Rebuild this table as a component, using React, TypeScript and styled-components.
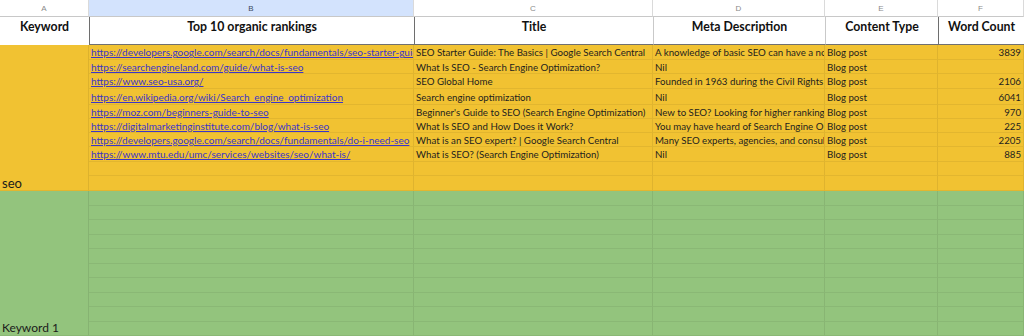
import React from "react";
import styled, { createGlobalStyle } from "styled-components";

const YELLOW = "#f1c232";
const GREEN = "#93c47d";

const GlobalStyle = createGlobalStyle`
  html, body { margin: 0; padding: 0; background: #ffffff; }
  body { font-family: Lato, "Open Sans", sans-serif; overflow: hidden; }
`;

const COLS = [89, 325, 239, 172, 113, 86];
const YELLOW_ROWS = [15, 14, 15, 16, 14, 14, 14, 15, 14, 15];
const GREEN_ROWS = [15, 14, 15, 14, 15, 14, 15, 14, 15, 14];

const Sheet = styled.div`
  display: grid;
  width: 1024px;
  height: 336px;
  overflow: hidden;
  grid-template-columns: ${COLS.map((c) => c + "px").join(" ")};
  grid-template-rows: 17px 28px ${[...YELLOW_ROWS, ...GREEN_ROWS].map((r) => r + "px").join(" ")};
`;

const ColLetter = styled.div<{ $active?: boolean }>`
  display: flex;
  align-items: center;
  justify-content: center;
  background: ${(p) => (p.$active ? "#d3e3fd" : "#ffffff")};
  color: ${(p) => (p.$active ? "#3c4a60" : "#8a8a8a")};
  font-family: "Liberation Sans", Arial, sans-serif;
  font-size: 8px;
  border-right: 1px solid #dadada;
  border-bottom: 1px solid #c8c8c8;
  box-sizing: border-box;
`;

const HeadCell = styled.div<{ $dark?: boolean; $first?: boolean }>`
  display: flex;
  justify-content: center;
  align-items: flex-start;
  padding-top: 2px;
  box-sizing: border-box;
  background: #ffffff;
  font-family: Lato, sans-serif;
  font-weight: 700;
  font-size: 12.3px;
  line-height: 16px;
  color: #111;
  border-left: ${(p) => (p.$first ? "none" : `1px solid ${p.$dark ? "#6e6e6e" : "#c9c9c9"}`)};
  border-bottom: ${(p) => (p.$first ? "none" : "1.5px solid #707070")};
  white-space: nowrap;
  overflow: hidden;
`;

const KeywordCell = styled.div<{ $bg: string; $span: number; $size: number }>`
  grid-row: span ${(p) => p.$span};
  background: ${(p) => p.$bg};
  display: flex;
  align-items: flex-end;
  padding: 0 2px 0 2px;
  box-sizing: border-box;
  font-family: Lato, sans-serif;
  font-size: ${(p) => p.$size}px;
  line-height: 14px;
  color: #1b1b1b;
  border-right: 1px solid rgba(0, 0, 0, 0.08);
  border-bottom: 1px solid rgba(0, 0, 0, 0.06);
`;

const DataCell = styled.div<{ $bg: string; $right?: boolean; $link?: boolean }>`
  background: ${(p) => p.$bg};
  display: flex;
  align-items: center;
  justify-content: ${(p) => (p.$right ? "flex-end" : "flex-start")};
  padding: 0 2px;
  box-sizing: border-box;
  overflow: hidden;
  white-space: nowrap;
  font-family: Lato, sans-serif;
  font-size: ${(p) => (p.$link ? "10px" : "9.7px")};
  line-height: 12px;
  color: ${(p) => (p.$link ? "#3b35c9" : "#1e1e1e")};
  text-decoration: ${(p) => (p.$link ? "underline" : "none")};
  text-underline-offset: 1px;
  border-right: 1px solid rgba(0, 0, 0, 0.07);
  border-bottom: 1px solid rgba(0, 0, 0, 0.06);
`;

type Row = { url: string; title: string; meta: string; type: string; count: string };

const rows: Row[] = [
  { url: "https://developers.google.com/search/docs/fundamentals/seo-starter-guid", title: "SEO Starter Guide: The Basics | Google Search Central", meta: "A knowledge of basic SEO can have a no", type: "Blog post", count: "3839" },
  { url: "https://searchengineland.com/guide/what-is-seo", title: "What Is SEO - Search Engine Optimization?", meta: "Nil", type: "Blog post", count: "" },
  { url: "https://www.seo-usa.org/", title: "SEO Global Home", meta: "Founded in 1963 during the Civil Rights", type: "Blog post", count: "2106" },
  { url: "https://en.wikipedia.org/wiki/Search_engine_optimization", title: "Search engine optimization", meta: "Nil", type: "Blog post", count: "6041" },
  { url: "https://moz.com/beginners-guide-to-seo", title: "Beginner's Guide to SEO (Search Engine Optimization)", meta: "New to SEO? Looking for higher ranking", type: "Blog post", count: "970" },
  { url: "https://digitalmarketinginstitute.com/blog/what-is-seo", title: "What Is SEO and How Does it Work?", meta: "You may have heard of Search Engine O", type: "Blog post", count: "225" },
  { url: "https://developers.google.com/search/docs/fundamentals/do-i-need-seo", title: "What is an SEO expert? | Google Search Central", meta: "Many SEO experts, agencies, and consul", type: "Blog post", count: "2205" },
  { url: "https://www.mtu.edu/umc/services/websites/seo/what-is/", title: "What is SEO? (Search Engine Optimization)", meta: "Nil", type: "Blog post", count: "885" },
  { url: "", title: "", meta: "", type: "", count: "" },
  { url: "", title: "", meta: "", type: "", count: "" },
];

const emptyRows: Row[] = Array.from({ length: 10 }, () => ({ url: "", title: "", meta: "", type: "", count: "" }));

const letters = ["A", "B", "C", "D", "E", "F"];
const headers = ["Keyword", "Top 10 organic rankings", "Title", "Meta Description", "Content Type", "Word Count"];
const darkLeft = [false, true, true, false, false, true];

function Block({ keyword, bg, data, size }: { keyword: string; bg: string; data: Row[]; size: number }) {
  return (
    <>
      <KeywordCell $bg={bg} $span={data.length} $size={size}>{keyword}</KeywordCell>
      {data.map((r, i) => (
        <React.Fragment key={i}>
          <DataCell $bg={bg} $link={!!r.url}>{r.url}</DataCell>
          <DataCell $bg={bg}>{r.title}</DataCell>
          <DataCell $bg={bg}>{r.meta}</DataCell>
          <DataCell $bg={bg}>{r.type}</DataCell>
          <DataCell $bg={bg} $right>{r.count}</DataCell>
        </React.Fragment>
      ))}
    </>
  );
}

export default function App() {
  return (
    <>
      <GlobalStyle />
      <Sheet>
        {letters.map((l) => (
          <ColLetter key={l} $active={l === "B"}>{l}</ColLetter>
        ))}
        {headers.map((h, i) => (
          <HeadCell key={h} $first={i === 0} $dark={darkLeft[i]}>{h}</HeadCell>
        ))}
        <Block keyword="seo" bg={YELLOW} data={rows} size={13} />
        <Block keyword="Keyword 1" bg={GREEN} data={emptyRows} size={12} />
      </Sheet>
    </>
  );
}
